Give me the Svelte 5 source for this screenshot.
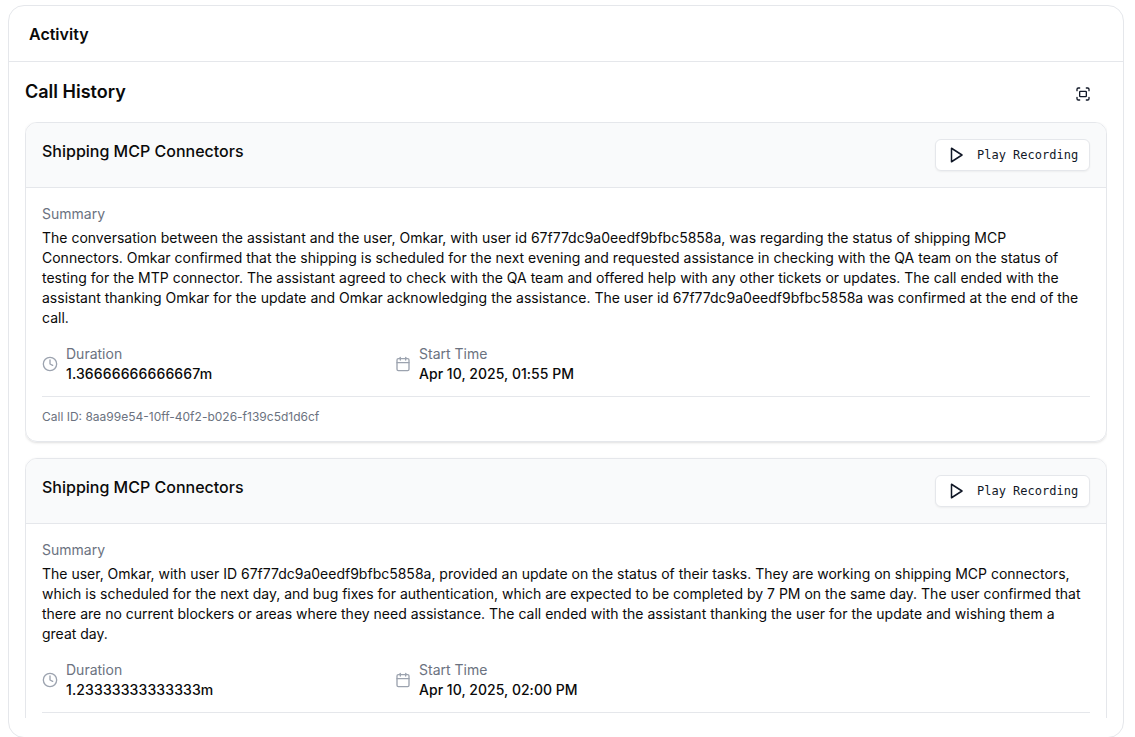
<script>
	const calls = [
		{
			title: 'Shipping MCP Connectors',
			summary:
				'The conversation between the assistant and the user, Omkar, with user id 67f77dc9a0eedf9bfbc5858a, was regarding the status of shipping MCP Connectors. Omkar confirmed that the shipping is scheduled for the next evening and requested assistance in checking with the QA team on the status of testing for the MTP connector. The assistant agreed to check with the QA team and offered help with any other tickets or updates. The call ended with the assistant thanking Omkar for the update and Omkar acknowledging the assistance. The user id 67f77dc9a0eedf9bfbc5858a was confirmed at the end of the call.',
			duration: '1.36666666666667m',
			start: 'Apr 10, 2025, 01:55 PM',
			id: '8aa99e54-10ff-40f2-b026-f139c5d1d6cf'
		},
		{
			title: 'Shipping MCP Connectors',
			summary:
				'The user, Omkar, with user ID 67f77dc9a0eedf9bfbc5858a, provided an update on the status of their tasks. They are working on shipping MCP connectors, which is scheduled for the next day, and bug fixes for authentication, which are expected to be completed by 7 PM on the same day. The user confirmed that there are no current blockers or areas where they need assistance. The call ended with the assistant thanking the user for the update and wishing them a great day.',
			duration: '1.23333333333333m',
			start: 'Apr 10, 2025, 02:00 PM'
		}
	];
</script>

<div class="panel">
	<header class="panel-header">Activity</header>
	<div class="panel-body">
		<div class="history-head">
			<h2>Call History</h2>
			<button class="icon-btn" type="button" aria-label="Fullscreen">
				<svg width="16" height="16" viewBox="0 0 24 24" fill="none" stroke="currentColor" stroke-width="2" stroke-linecap="round" stroke-linejoin="round">
					<path d="M3 7V5a2 2 0 0 1 2-2h2" />
					<path d="M17 3h2a2 2 0 0 1 2 2v2" />
					<path d="M21 17v2a2 2 0 0 1-2 2h-2" />
					<path d="M7 21H5a2 2 0 0 1-2-2v-2" />
					<rect x="7" y="8" width="10" height="8" rx="1" />
				</svg>
			</button>
		</div>
		<div class="call-list">
			{#each calls as call}
				<article class="call">
					<div class="call-head">
						<h3>{call.title}</h3>
						<button class="play" type="button">
							<svg width="18" height="18" viewBox="0 0 24 24" fill="none" stroke="currentColor" stroke-width="2" stroke-linecap="round" stroke-linejoin="round">
								<polygon points="6 3 20 12 6 21 6 3" />
							</svg>
							<span>Play Recording</span>
						</button>
					</div>
					<div class="call-body">
						<div class="label">Summary</div>
						<p class="summary">{call.summary}</p>
						<div class="meta">
							<div class="meta-item">
								<svg width="16" height="16" viewBox="0 0 24 24" fill="none" stroke="currentColor" stroke-width="2" stroke-linecap="round" stroke-linejoin="round">
									<circle cx="12" cy="12" r="10" />
									<polyline points="12 6 12 12 16 14" />
								</svg>
								<div>
									<div class="label">Duration</div>
									<div class="value duration">{call.duration}</div>
								</div>
							</div>
							<div class="meta-item">
								<svg width="16" height="16" viewBox="0 0 24 24" fill="none" stroke="currentColor" stroke-width="2" stroke-linecap="round" stroke-linejoin="round">
									<path d="M8 2v4" />
									<path d="M16 2v4" />
									<rect x="3" y="4" width="18" height="18" rx="2" />
									<path d="M3 10h18" />
								</svg>
								<div>
									<div class="label">Start Time</div>
									<div class="value">{call.start}</div>
								</div>
							</div>
						</div>
						{#if call.id}
							<div class="call-id">Call ID: {call.id}</div>
						{/if}
					</div>
				</article>
			{/each}
		</div>
	</div>
</div>

<style>
	:global(body) {
		background: #fff;
		overflow: hidden;
	}

	.panel {
		box-sizing: border-box;
		width: 1116px;
		height: 733px;
		margin: 5px 0 0 8px;
		display: flex;
		flex-direction: column;
		border: 1px solid #e5e7eb;
		border-radius: 16px;
		font-family: Inter, sans-serif;
		color: #0a0a0a;
		background: #fff;
	}

	.panel-header {
		height: 56px;
		flex-shrink: 0;
		box-sizing: border-box;
		padding: 0 20px;
		display: flex;
		align-items: center;
		border-bottom: 1px solid #e5e7eb;
		font-size: 16px;
		font-weight: 600;
	}

	.panel-body {
		flex: 1;
		min-height: 0;
		display: flex;
		flex-direction: column;
		padding: 16px 16px 19px;
		overflow: hidden;
	}

	.history-head {
		display: flex;
		justify-content: space-between;
		align-items: center;
		height: 28px;
		margin-bottom: 16px;
		flex-shrink: 0;
	}

	h2 {
		margin: 0;
		font-size: 18px;
		line-height: 28px;
		font-weight: 600;
	}

	.icon-btn {
		width: 32px;
		height: 32px;
		margin: 4px 8px 0 0;
		padding: 0;
		display: flex;
		align-items: center;
		justify-content: center;
		border: none;
		background: none;
		color: #111827;
	}

	.call-list {
		flex: 1;
		min-height: 0;
		overflow: hidden;
		display: flex;
		flex-direction: column;
		gap: 16px;
	}

	.call {
		flex-shrink: 0;
		margin: 0;
		border: 1px solid #e5e7eb;
		border-radius: 12px;
		box-shadow: 0 1px 3px rgba(0, 0, 0, 0.1), 0 1px 2px -1px rgba(0, 0, 0, 0.1);
		overflow: hidden;
	}

	.call-head {
		height: 64px;
		padding: 0 16px;
		display: flex;
		justify-content: space-between;
		align-items: flex-start;
		background: #f9fafb;
		border-bottom: 1px solid #e5e7eb;
	}

	h3 {
		margin: 16px 0 0;
		font-size: 16px;
		line-height: 24px;
		font-weight: 500;
	}

	.play {
		margin-top: 16px;
		height: 32px;
		width: 155px;
		padding: 0 11px;
		display: flex;
		align-items: center;
		gap: 12px;
		background: #fff;
		border: 1px solid #e5e7eb;
		border-radius: 6px;
		box-shadow: 0 1px 2px rgba(0, 0, 0, 0.05);
		color: #111827;
		font-family: "DejaVu Sans Mono", monospace;
		font-size: 12px;
		white-space: nowrap;
		box-sizing: border-box;
	}

	.play svg {
		flex-shrink: 0;
	}

	.call-body {
		padding: 16px;
	}

	.label {
		font-size: 14px;
		line-height: 20px;
		color: #6b7280;
	}

	.summary {
		margin: 4px 0 0;
		font-size: 14px;
		line-height: 20px;
		color: #0a0a0a;
	}

	.meta {
		display: grid;
		grid-template-columns: 337px 1fr;
		gap: 16px;
		margin-top: 16px;
		padding-bottom: 12px;
		border-bottom: 1px solid #e5e7eb;
	}

	.meta-item {
		display: flex;
		align-items: center;
		gap: 8px;
		color: #9ca3af;
	}

	.value {
		font-size: 14px;
		line-height: 20px;
		font-weight: 500;
		letter-spacing: 0.03px;
		color: #0a0a0a;
	}

	.duration {
		letter-spacing: 0.13px;
	}

	.call-id {
		margin-top: 12px;
		font-size: 12px;
		line-height: 16px;
		color: #6b7280;
	}
</style>
